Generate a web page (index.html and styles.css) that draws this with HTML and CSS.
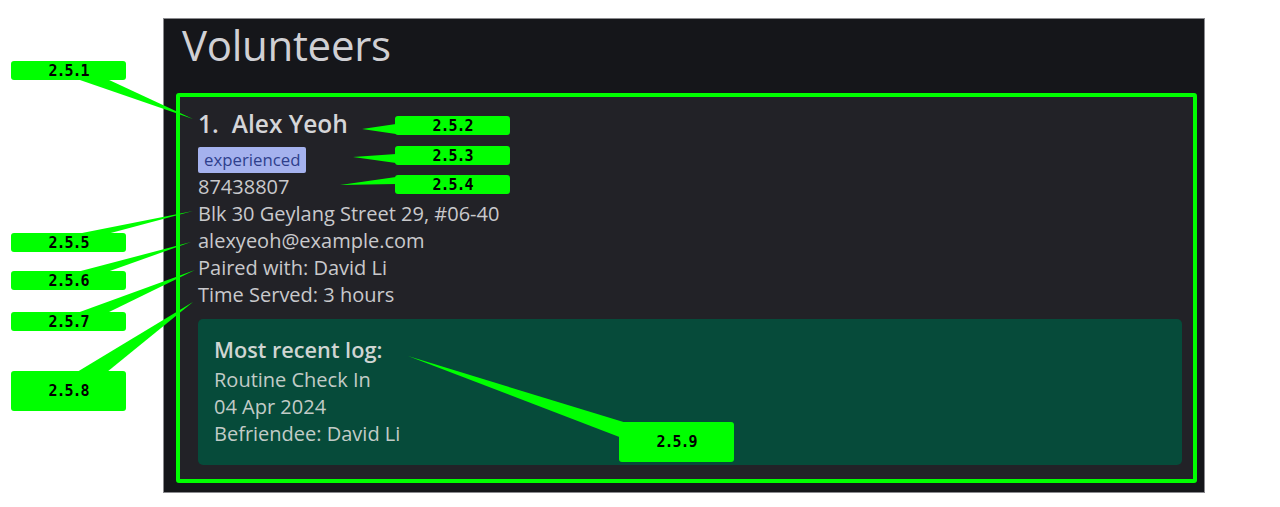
FILE: index.html
```html
<!DOCTYPE html>
<html>
<head>
<meta charset="utf-8">
<link rel="stylesheet" href="styles.css">
</head>
<body>
<div class="stage">
  <section class="panel">
    <h1 class="title">Volunteers</h1>
    <div class="card">
      <div class="name"><span class="idx">1.</span><span>Alex Yeoh</span></div>
      <div class="tags"><span class="tag">experienced</span></div>
      <div class="line">87438807</div>
      <div class="line">Blk 30 Geylang Street 29, #06-40</div>
      <div class="line">alexyeoh@example.com</div>
      <div class="line">Paired with: David Li</div>
      <div class="line">Time Served: 3 hours</div>
      <div class="log">
        <div class="log-title">Most recent log:</div>
        <div class="log-line">Routine Check In</div>
        <div class="log-line">04 Apr 2024</div>
        <div class="log-line">Befriendee: David Li</div>
      </div>
    </div>
  </section>

  <svg class="pointers" width="1280" height="507" viewBox="0 0 1280 507">
    <g fill="#00ff00">
      <polygon points="77,79 107,79 193,119"/>
      <polygon points="362,129 396,124 396,134"/>
      <polygon points="353,157 396,154 396,163"/>
      <polygon points="340,185 396,177 396,184"/>
      <polygon points="77,234 107,234 193,211"/>
      <polygon points="77,272 107,272 191,242"/>
      <polygon points="77,313 107,313 195,270"/>
      <polygon points="77,372 107,372 193,302"/>
      <polygon points="408,356 630,424 622,438"/>
    </g>
  </svg>

  <div class="label l1">2.5.1</div>
  <div class="label l2">2.5.2</div>
  <div class="label l3">2.5.3</div>
  <div class="label l4">2.5.4</div>
  <div class="label l5">2.5.5</div>
  <div class="label l6">2.5.6</div>
  <div class="label l7">2.5.7</div>
  <div class="label l8 tall">2.5.8</div>
  <div class="label l9 tall">2.5.9</div>
</div>
</body>
</html>
```

FILE: styles.css
```css
* { box-sizing: border-box; }
html, body { margin: 0; padding: 0; background: #ffffff; }
body { width: 1280px; height: 507px; overflow: hidden; font-family: "Open Sans", "Noto Sans", sans-serif; }

.stage { position: relative; width: 1280px; height: 507px; padding: 18px 0 0 163px; }

.panel {
  width: 1042px;
  height: 475px;
  background: #15161a;
  border: 1px solid #8a8a8e;
  padding: 0 7px 0 12px;
}

.title {
  margin: 0;
  padding: 1px 0 0 6px;
  height: 74px;
  font-size: 42px;
  font-weight: 500;
  color: #d0d0d4;
  line-height: 50px;
  letter-spacing: -0.3px;
}

.card {
  height: 390px;
  border: 4px solid #00ff00;
  border-radius: 3px;
  background: #222227;
  padding: 11px 10px 0 18px;
}

.name {
  display: flex;
  gap: 13px;
  font-size: 24.5px;
  font-weight: 600;
  color: #d5d5d8;
  line-height: 32px;
}

.tags { margin-top: 7px; height: 26px; display: flex; }
.tag {
  background: #a5b2ee;
  color: #2e3f8c;
  font-size: 16.8px;
  line-height: 26px;
  padding: 0 6px;
  border-radius: 2px;
}

.line {
  font-size: 20px;
  line-height: 27px;
  color: #c9c9cc;
  height: 27px;
}

.log {
  margin-top: 11px;
  margin-right: 1px;
  height: 146px;
  background: #064b3a;
  border-radius: 5px;
  padding: 14px 16px;
  color: #c2cbc7;
}
.log-title { font-size: 21.7px; font-weight: 600; line-height: 33px; color: #cfd5d2; }
.log-line { font-size: 20px; line-height: 27px; }

.pointers { position: absolute; left: 0; top: 0; pointer-events: none; }

.label {
  position: absolute;
  width: 115px;
  height: 19px;
  background: #00ff00;
  border-radius: 3px;
  color: #000;
  font-family: "DejaVu Sans Mono", monospace;
  font-weight: 700;
  font-size: 15px;
  letter-spacing: -1px;
  display: flex;
  align-items: center;
  justify-content: center;
}
.label.tall { height: 40px; }
.l1 { left: 11px; top: 61px; }
.l2 { left: 395px; top: 116px; }
.l3 { left: 395px; top: 146px; }
.l4 { left: 395px; top: 175px; }
.l5 { left: 11px; top: 233px; }
.l6 { left: 11px; top: 271px; }
.l7 { left: 11px; top: 312px; }
.l8 { left: 11px; top: 371px; }
.l9 { left: 619px; top: 422px; }
```
